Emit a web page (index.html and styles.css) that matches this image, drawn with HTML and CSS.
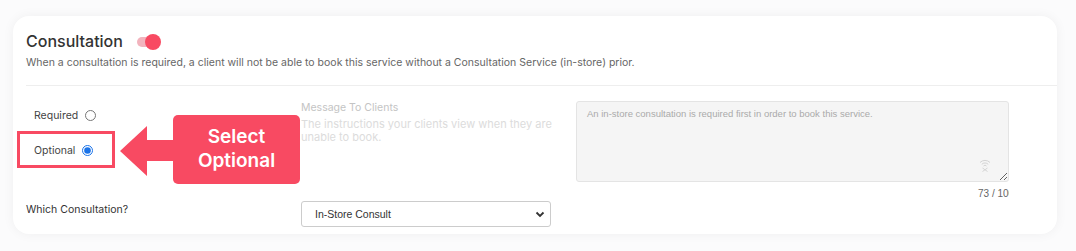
FILE: index.html
```html
<!DOCTYPE html>
<html>
<head>
<meta charset="utf-8">
<link rel="stylesheet" href="styles.css">
</head>
<body>
<div class="page">
  <section class="card">
    <header class="card-head">
      <div class="title-row">
        <h2 class="title">Consultation</h2>
        <span class="toggle"><span class="knob"></span></span>
      </div>
      <p class="desc">When a consultation is required, a client will not be able to book this service without a Consultation Service (in-store) prior.</p>
    </header>
    <div class="body">
      <div class="radios">
        <label class="radio-row">Required <input type="radio" name="c"></label>
        <label class="radio-row">Optional <input type="radio" name="c" checked></label>
      </div>
      <div class="msg">
        <div class="msg-label">Message To Clients</div>
        <p class="msg-help">The instructions your clients view when they are unable to book.</p>
      </div>
      <div class="msg-field">
        <div class="ta-wrap">
          <textarea class="ta" readonly placeholder="An in-store consultation is required first in order to book this service."></textarea>
          <svg class="ta-icon" width="12" height="14" viewBox="0 0 12 14"><path d="M1 4.5a7 7 0 0 1 10 0M2.8 6.3a4.5 4.5 0 0 1 6.4 0M4.5 8a2 2 0 0 1 3 0" fill="none" stroke="#d4d4d4" stroke-width="1"/><path d="M3.5 10l5 3.5M8.5 10l-5 3.5" stroke="#d4d4d4" stroke-width="1"/></svg>
        </div>
        <div class="counter"><span>73 / 100</span></div>
      </div>
      <div class="which">Which Consultation?</div>
      <div class="select">
        <span>In-Store Consult</span>
        <svg width="10" height="8" viewBox="0 0 10 8"><path d="M1.5 2.5l3.5 3.5 3.5-3.5" fill="none" stroke="#333" stroke-width="1.8"/></svg>
      </div>
    </div>

    <div class="highlight"></div>
    <svg class="arrow" width="54" height="50" viewBox="0 0 54 50"><path d="M0 25 L27 0 L27 14 L54 14 L54 35 L27 35 L27 50 Z" fill="#f84a62"/></svg>
    <div class="callout">Select<br>Optional</div>
  </section>
</div>
</body>
</html>
```
FILE: styles.css
```css
* { box-sizing: border-box; }
html, body { margin: 0; padding: 0; background: #fbfbfc; }
body { font-family: Inter, "Open Sans", sans-serif; color: #333; }

.page { padding: 16px 19px 17px 13px; }

.card {
  position: relative;
  background: #fff;
  border-radius: 16px;
  box-shadow: 0 0 12px rgba(0, 0, 0, 0.05);
  height: 218px;
  padding-top: 15px;
}

.card-head {
  margin-left: 13px;
  border-bottom: 1px solid #eeeeee;
  padding-bottom: 15px;
}

.title-row { display: flex; align-items: center; height: 20px; }
.title {
  margin: 0;
  font-size: 16px;
  font-weight: 500;
  line-height: 20px;
  color: #333;
}
.toggle {
  position: relative;
  width: 22px;
  height: 10px;
  border-radius: 5px;
  background: #f2b3bd;
  margin-left: 14px;
  margin-top: 2px;
}
.knob {
  position: absolute;
  left: 8px;
  top: -3px;
  width: 16px;
  height: 16px;
  border-radius: 50%;
  background: #f84a62;
}

.desc {
  margin: 5px 0 0;
  font-size: 10.5px;
  line-height: 14px;
  color: #666;
}

.body {
  display: grid;
  grid-template-columns: 275px 275px 433px;
  grid-template-rows: 99px 28px;
  margin-left: 13px;
  padding-top: 15px;
}

.radios { padding-left: 8px; padding-top: 6px; display: flex; flex-direction: column; gap: 19px; }
.radio-row { display: flex; align-items: center; font-size: 10.5px; color: #444; height: 16px; }
.radio-row input { margin: 0 0 0 7px; width: 11px; height: 11px; accent-color: #1a73e8; }

.msg-label { font-size: 10.5px; color: #c4c4c4; line-height: 14px; margin-top: 0; }
.msg-help { margin: 3px 0 0; font-size: 11px; line-height: 13px; color: #dcdcdc; width: 260px; }

.msg-field { display: flex; flex-direction: column; }
.ta-wrap { position: relative; height: 81px; }
.ta {
  display: block;
  width: 100%;
  height: 81px;
  background: #f5f5f5;
  border: 1px solid #e4e4e4;
  border-radius: 3px;
  padding: 6px 10px;
  font-family: "Liberation Sans", Arial, sans-serif;
  font-size: 9.5px;
  color: #aaa;
  resize: both;
  outline: none;
}
.ta::placeholder { color: #aaa; }
.ta-icon { position: absolute; right: 18px; bottom: 10px; }

.counter {
  width: 433px;
  overflow: hidden;
  padding-left: 402px;
  white-space: nowrap;
  font-family: "Liberation Sans", Arial, sans-serif;
  font-size: 10px;
  color: #666;
  margin-top: 6px;
}

.which { font-size: 10.5px; color: #333; align-self: start; padding-top: 3px; }
.select {
  width: 250px;
  height: 26px;
  margin-top: 1px;
  border: 1px solid #ccc;
  border-radius: 3px;
  display: flex;
  align-items: center;
  justify-content: space-between;
  padding: 0 5px 0 13px;
  font-family: "Liberation Sans", Arial, sans-serif;
  font-size: 10.5px;
  color: #333;
}

.highlight {
  position: absolute;
  left: 4px;
  top: 115px;
  width: 98px;
  height: 37px;
  border: 3px solid #f84a62;
}
.arrow { position: absolute; left: 107px; top: 110px; }
.callout {
  position: absolute;
  left: 160px;
  top: 99px;
  width: 127px;
  height: 69px;
  border-radius: 5px;
  background: #f84a62;
  color: #fff;
  font-size: 19px;
  font-weight: 600;
  line-height: 24px;
  text-align: center;
  padding-top: 10px;
}
```
